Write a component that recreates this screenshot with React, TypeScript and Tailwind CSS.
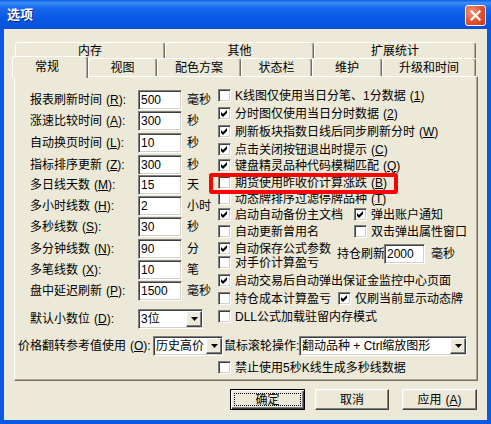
import type { ReactNode } from "react";

// classic 3D borders, XP "beige" palette
const SUNKEN =
  "border border-t-[#808080] border-l-[#808080] border-r-white border-b-white shadow-[inset_1px_1px_0_#404040,inset_-1px_-1px_0_#d4d0c8]";
const RAISED =
  "border border-t-white border-l-white border-r-[#404040] border-b-[#404040] shadow-[inset_-1px_-1px_0_#808080,inset_1px_1px_0_#f1efe2]";

function Mn({ k }: { k: string }) {
  return (
    <span className="ml-[4px]">
      (<span className="underline underline-offset-[1px]">{k}</span>)
    </span>
  );
}

function Check({ on }: { on?: boolean }) {
  return (
    <span className={`relative block h-[13px] w-[13px] shrink-0 bg-white ${SUNKEN}`}>
      {on && (
        <svg className="absolute left-0 top-0" width="11" height="11" viewBox="0 0 11 11">
          <path d="M2 4 L4 6 L8 2 L8 5 L4 9 L2 7 Z" fill="#000" />
        </svg>
      )}
    </span>
  );
}

function Opt({ on, children }: { on?: boolean; children: ReactNode }) {
  return (
    <div className="flex h-[17px] items-center gap-[4px] whitespace-nowrap">
      <Check on={on} />
      <span>{children}</span>
    </div>
  );
}

function Arrow() {
  return (
    <span className={`flex h-[16px] w-[16px] shrink-0 items-center justify-center bg-[#ece9d8] ${RAISED}`}>
      <svg width="7" height="4" viewBox="0 0 7 4">
        <path d="M0 0 H7 L3.5 4 Z" fill="#000" />
      </svg>
    </span>
  );
}

function Combo({ w, children }: { w: string; children: ReactNode }) {
  return (
    <div className={`flex h-[20px] shrink-0 items-center bg-white ${w} ${SUNKEN}`}>
      <span className="flex-1 overflow-hidden whitespace-nowrap pl-[2px] leading-[16px]">{children}</span>
      <Arrow />
    </div>
  );
}

function Field({ value, w }: { value: string; w: string }) {
  return (
    <input
      readOnly
      value={value}
      className={`h-[20px] shrink-0 bg-white px-[2px] text-[12px] leading-[16px] outline-none ${w} ${SUNKEN}`}
    />
  );
}

function Btn({ children, def }: { children: ReactNode; def?: boolean }) {
  if (def) {
    return (
      <button
        type="button"
        className="relative flex h-[21px] w-[75px] items-center justify-center border border-black bg-[#ece9d8] shadow-[inset_1px_1px_0_white,inset_-1px_-1px_0_#404040,inset_-2px_-2px_0_#808080]"
      >
        <span className="pointer-events-none absolute inset-[3px] border border-dotted border-black" />
        {children}
      </button>
    );
  }
  return (
    <button type="button" className={`flex h-[21px] items-center justify-center bg-[#ece9d8] ${RAISED}`}>
      {children}
    </button>
  );
}

const fields = [
  { label: "报表刷新时间", k: "R", v: "500", unit: "毫秒", h: "h-[21px]" },
  { label: "涨速比较时间", k: "A", v: "300", unit: "秒", h: "h-[22px]" },
  { label: "自动换页时间", k: "L", v: "10", unit: "秒", h: "h-[22px]" },
  { label: "指标排序更新", k: "Z", v: "300", unit: "秒", h: "h-[20px]" },
  { label: "多日线天数", k: "M", v: "15", unit: "天", h: "h-[21px]" },
  { label: "多小时线数", k: "H", v: "2", unit: "小时", h: "h-[21px]" },
  { label: "多秒线数", k: "S", v: "30", unit: "秒", h: "h-[22px]" },
  { label: "多分钟线数", k: "N", v: "90", unit: "分", h: "h-[21px]" },
  { label: "多笔线数", k: "X", v: "10", unit: "笔", h: "h-[21px]" },
  { label: "盘中延迟刷新", k: "P", v: "1500", unit: "毫秒", h: "h-[28px]" },
];

function Tab({ w, children, on }: { w: string; children: ReactNode; on?: boolean }) {
  if (on) {
    return (
      <div
        className={`relative z-10 -mb-[2px] -ml-[2px] flex h-[22px] items-center justify-center rounded-t-[3px] border-l border-t border-r border-l-white border-t-white border-r-[#716f64] bg-[#ece9d8] pb-[2px] pr-[6px] shadow-[inset_-1px_0_0_#aca899] ${w}`}
      >
        {children}
      </div>
    );
  }
  return (
    <div
      className={`flex h-full items-center justify-center rounded-t-[3px] border-l border-t border-r border-l-white border-t-white border-r-[#716f64] shadow-[inset_-1px_0_0_#aca899] ${w}`}
    >
      {children}
    </div>
  );
}

export default function App() {
  return (
    <div className="relative flex h-[424px] w-[491px] flex-col overflow-hidden bg-[#0a58e6] font-[family-name:'Liberation_Sans','Noto_Sans_CJK_SC',sans-serif] text-[12px] leading-[14px] text-black">
      {/* title bar */}
      <div className="flex h-[29px] shrink-0 items-center justify-between bg-[linear-gradient(to_bottom,#0a5ee8_0%,#3d8ff6_10%,#1a6cf0_25%,#0a5ae6_55%,#0856e3_85%,#0a4ed6_100%)] pl-[7px] pr-[5px] pt-[1px]">
        <span className="text-[13px] font-bold text-white [text-shadow:1px_1px_0_#0a1f8a]">选项</span>
        <span className="flex h-[21px] w-[21px] items-center justify-center rounded-[3px] border border-white bg-[radial-gradient(circle_at_30%_30%,#f0957a_0%,#e0512f_55%,#c53a1c_100%)]">
          <svg width="11" height="11" viewBox="0 0 11 11">
            <path d="M1.5 1.5 L9.5 9.5 M9.5 1.5 L1.5 9.5" stroke="#fff" strokeWidth="2.2" strokeLinecap="square" />
          </svg>
        </span>
      </div>

      {/* client area */}
      <div className="mx-[4px] mb-[4px] flex flex-1 flex-col bg-[#ece9d8] pl-[10px] pt-[13px]">
        {/* tabs */}
        <div className="ml-[1px] flex h-[16px]">
          <Tab w="w-[150px]">内存</Tab>
          <Tab w="w-[149px]">其他</Tab>
          <Tab w="w-[162px]">扩展统计</Tab>
        </div>
        <div className="flex h-[18px] items-end">
          <Tab w="w-[76px]" on>
            常规
          </Tab>
          <Tab w="w-[69px]">视图</Tab>
          <Tab w="w-[84px]">配色方案</Tab>
          <Tab w="w-[71px]">状态栏</Tab>
          <Tab w="w-[70px]">维护</Tab>
          <Tab w="w-[94px]">升级和时间</Tab>
        </div>

        {/* panel */}
        <div className="flex h-[305px] w-[464px] flex-col border border-t-white border-l-white border-r-[#716f64] border-b-[#716f64] pt-[10px] shadow-[inset_-1px_-1px_0_#aca899]">
          <div className="ml-[15px] flex">
            {/* left fields */}
            <div className="mt-[3px] flex w-[188px] flex-col">
              {fields.map((f) => (
                <div key={f.label} className={`flex items-start ${f.h}`}>
                  <div className="flex h-[20px] items-center">
                    <span className="w-[108px] whitespace-nowrap">
                      {f.label}
                      <Mn k={f.k} />:
                    </span>
                    <Field value={f.v} w="w-[44px]" />
                    <span className="ml-[5px] whitespace-nowrap">{f.unit}</span>
                  </div>
                </div>
              ))}
              <div className="flex h-[20px] items-center">
                <span className="w-[108px] whitespace-nowrap">
                  默认小数位
                  <Mn k="D" />:
                </span>
                <Combo w="w-[65px]">3位</Combo>
              </div>
            </div>

            {/* right options */}
            <div className="flex flex-col">
              <div className="h-[18px]">
                <Opt>
                  K线图仅使用当日分笔、1分数据
                  <Mn k="1" />
                </Opt>
              </div>
              <div className="h-[18px]">
                <Opt on>
                  分时图仅使用当日分时数据
                  <Mn k="2" />
                </Opt>
              </div>
              <div className="h-[18px]">
                <Opt on>
                  刷新板块指数日线后同步刷新分时
                  <Mn k="W" />
                </Opt>
              </div>
              <div className="h-[16px]">
                <Opt on>
                  点击关闭按钮退出时提示
                  <Mn k="C" />
                </Opt>
              </div>
              <div className="h-[17px]">
                <Opt on>
                  键盘精灵品种代码模糊匹配
                  <Mn k="Q" />
                </Opt>
              </div>
              <div className="h-[16px]">
                <Opt>
                  期货使用昨收价计算涨跌
                  <Mn k="B" />
                </Opt>
              </div>
              <div className="h-[16px]">
                <Opt>
                  动态牌排序过滤停牌品种
                  <Mn k="T" />
                </Opt>
              </div>
              <div className="flex h-[17px]">
                <div className="w-[136px]">
                  <Opt on>启动自动备份主文档</Opt>
                </div>
                <Opt on>弹出账户通知</Opt>
              </div>
              <div className="flex h-[17px]">
                <div className="w-[136px]">
                  <Opt>自动更新曾用名</Opt>
                </div>
                <Opt>双击弹出属性窗口</Opt>
              </div>
              <div className="flex">
                <div className="flex w-[119px] flex-col">
                  <div className="h-[14px]">
                    <Opt on>自动保存公式参数</Opt>
                  </div>
                  <div className="h-[18px]">
                    <Opt>对手价计算盈亏</Opt>
                  </div>
                </div>
                <div className="mt-[4px] flex h-[20px] items-center self-start">
                  <span className="w-[47px] whitespace-nowrap">持仓刷新</span>
                  <Field value="2000" w="w-[41px]" />
                  <span className="ml-[6px]">毫秒</span>
                </div>
              </div>
              <div className="h-[18px]">
                <Opt on>启动交易后自动弹出保证金监控中心页面</Opt>
              </div>
              <div className="flex h-[18px]">
                <div className="w-[120px]">
                  <Opt>持仓成本计算盈亏</Opt>
                </div>
                <Opt on>仅刷当前显示动态牌</Opt>
              </div>
              <div className="h-[17px]">
                <Opt>DLL公式加载驻留内存模式</Opt>
              </div>
            </div>
          </div>

          <div className="ml-[3px] mt-[7px] flex h-[20px] items-center">
            <span className="w-[135px] whitespace-nowrap">
              价格翻转参考值使用
              <Mn k="O" />:
            </span>
            <Combo w="w-[70px]">历史高价</Combo>
            <span className="w-[76px] whitespace-nowrap pl-[1px]">鼠标滚轮操作:</span>
            <Combo w="w-[168px]">翻动品种 + Ctrl缩放图形</Combo>
          </div>

          <div className="ml-[203px] mt-[3px]">
            <Opt>禁止使用5秒K线生成多秒线数据</Opt>
          </div>
        </div>

        {/* dialog buttons */}
        <div className="mt-[8px] flex pl-[216px]">
          <Btn def>确定</Btn>
          <div className="ml-[10px] w-[74px]">
            <div className="flex flex-col [&>button]:w-full">
              <Btn>取消</Btn>
            </div>
          </div>
          <div className="ml-[13px] w-[75px]">
            <div className="flex flex-col [&>button]:w-full">
              <Btn>
                应用
                <Mn k="A" />
              </Btn>
            </div>
          </div>
        </div>
      </div>

      {/* red annotation */}
      <div className="pointer-events-none absolute left-[209px] top-[173px] h-[21px] w-[189px] rounded-[3px] border-[4px] border-[#ff0000]" />
    </div>
  );
}
